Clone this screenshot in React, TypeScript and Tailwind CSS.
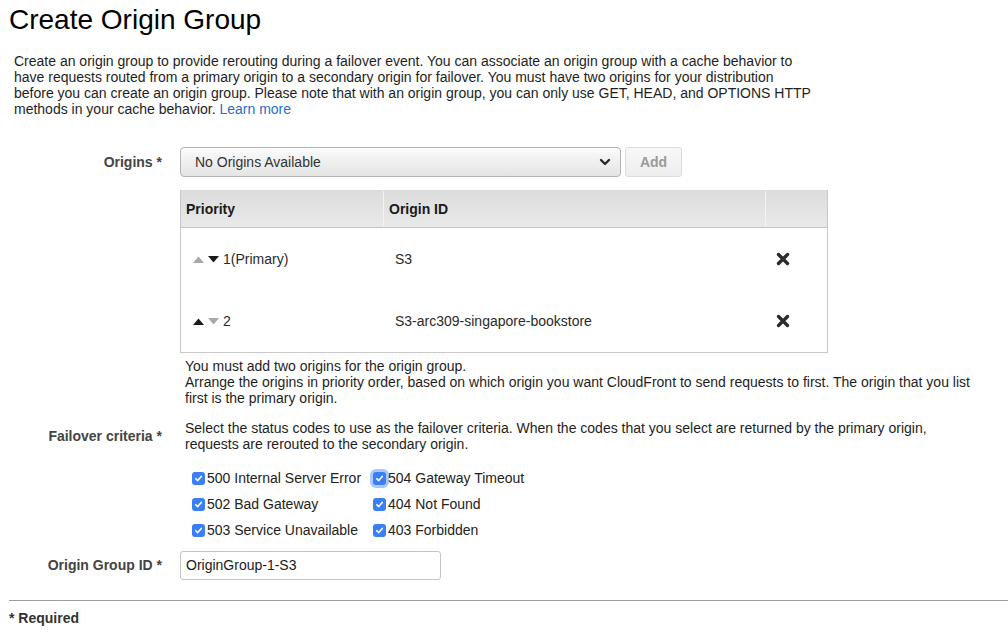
/**
 * CloudFront "Create Origin Group" form
 */

const codes = [
  { label: "500 Internal Server Error", focus: false },
  { label: "504 Gateway Timeout", focus: true },
  { label: "502 Bad Gateway", focus: false },
  { label: "404 Not Found", focus: false },
  { label: "503 Service Unavailable", focus: false },
  { label: "403 Forbidden", focus: false },
];

function Arrow({ dir, dark }: { dir: "up" | "down"; dark: boolean }) {
  return (
    <svg width="11" height="7" viewBox="0 0 11 7" className={dark ? "text-[#1a1a1a]" : "text-[#a8a8a8]"}>
      {dir === "up" ? (
        <polygon points="0,7 5.5,0.5 11,7" fill="currentColor" />
      ) : (
        <polygon points="0,0 5.5,6.5 11,0" fill="currentColor" />
      )}
    </svg>
  );
}

function RemoveIcon() {
  return (
    <svg width="14" height="14" viewBox="0 0 14 14" className="text-[#2b2b2b]">
      <path d="M2.5 2.5 L11.5 11.5 M11.5 2.5 L2.5 11.5" stroke="currentColor" strokeWidth="3.4" strokeLinecap="round" />
    </svg>
  );
}

function Checkbox({ focus }: { focus: boolean }) {
  return (
    <span
      className={`flex h-[13px] w-[13px] shrink-0 items-center justify-center rounded-[3px] bg-[#3a7ff5] ${
        focus ? "shadow-[0_0_0_3px_rgba(66,133,244,0.45)]" : ""
      }`}
    >
      <svg width="9" height="9" viewBox="0 0 9 9">
        <path d="M1.8 4.7 L3.7 6.6 L7.3 2.4" stroke="#fff" strokeWidth="1.6" fill="none" strokeLinecap="round" strokeLinejoin="round" />
      </svg>
    </span>
  );
}

export default function App() {
  const rows = [
    { up: false, down: true, priority: "1(Primary)", id: "S3" },
    { up: true, down: false, priority: "2", id: "S3-arc309-singapore-bookstore" },
  ];

  return (
    <div className="min-h-screen w-[1008px] bg-white font-['Liberation_Sans',Arial,Helvetica,sans-serif] text-[14px] text-[#1e1e1e]">
      {/* Title */}
      <h1 className="pl-[9px] text-[28px] leading-[40px] text-black">Create Origin Group</h1>

      {/* Intro */}
      <p className="mt-[13px] pl-[14px] leading-[16px]">
        Create an origin group to provide rerouting during a failover event. You can associate an origin group with a cache behavior to
        <br />
        have requests routed from a primary origin to a secondary origin for failover. You must have two origins for your distribution
        <br />
        before you can create an origin group. Please note that with an origin group, you can only use GET, HEAD, and OPTIONS HTTP
        <br />
        methods in your cache behavior. <span className="text-[#1f6fc6]">Learn more</span>
      </p>

      {/* Origins */}
      <div className="mt-[30px] flex items-center">
        <div className="w-[162px] shrink-0 text-right font-bold text-[#444]">Origins *</div>
        <div className="ml-[18px] flex h-[30px] w-[441px] items-center justify-between rounded-[4px] border border-[#b3b3b3] bg-linear-to-b from-[#fbfbfb] to-[#e4e4e4] pl-[14px] pr-[9px] text-[#333]">
          <span>No Origins Available</span>
          <svg width="12" height="8" viewBox="0 0 12 8">
            <path d="M2 2 L6 6 L10 2" stroke="#2a2a2a" strokeWidth="2.4" fill="none" strokeLinecap="round" strokeLinejoin="round" />
          </svg>
        </div>
        <div className="ml-[4px] flex h-[30px] w-[57px] items-center justify-center rounded-[3px] border border-[#dcdcdc] bg-linear-to-b from-[#f8f8f8] to-[#eeeeee] font-bold text-[#9a9a9a]">
          Add
        </div>
      </div>

      {/* Origins table */}
      <div className="ml-[180px] mt-[13px] w-[648px] border-x border-b border-[#c9c9c9]">
        <div className="flex h-[38px] border-b border-[#c6c6c6] bg-linear-to-b from-[#dcdcdc] to-[#e9e9e9] pt-[1px] font-bold text-[#1a1a1a]">
          <div className="flex w-[203px] items-center border-r border-[#f3f3f3] pl-[5px]">Priority</div>
          <div className="flex w-[382px] items-center border-r border-[#f3f3f3] pl-[5px]">Origin ID</div>
          <div className="flex-1" />
        </div>
        {rows.map((r) => (
          <div key={r.priority} className="flex h-[62px] items-center text-[#2a2a2a]">
            <div className="flex w-[203px] items-center pl-[12px]">
              <Arrow dir="up" dark={r.up} />
              <span className="ml-[4px]">
                <Arrow dir="down" dark={r.down} />
              </span>
              <span className="ml-[4px]">{r.priority}</span>
            </div>
            <div className="w-[382px] pl-[11px]">{r.id}</div>
            <div className="flex flex-1 justify-start pl-[10px]">
              <RemoveIcon />
            </div>
          </div>
        ))}
      </div>

      {/* Helper text */}
      <p className="ml-[185px] mt-[5px] leading-[16px]">
        You must add two origins for the origin group.
        <br />
        Arrange the origins in priority order, based on which origin you want CloudFront to send requests to first. The origin that you list
        <br />
        first is the primary origin.
      </p>

      {/* Failover criteria */}
      <div className="mt-[14px] flex items-center">
        <div className="w-[162px] shrink-0 text-right font-bold text-[#444]">Failover criteria *</div>
        <p className="ml-[23px] leading-[16px]">
          Select the status codes to use as the failover criteria. When the codes that you select are returned by the primary origin,
          <br />
          requests are rerouted to the secondary origin.
        </p>
      </div>

      <div className="ml-[192px] mt-[13px] grid w-[400px] grid-cols-[181px_1fr]">
        {codes.map((c) => (
          <label key={c.label} className="flex h-[26px] items-center gap-[2px] text-[#222]">
            <Checkbox focus={c.focus} />
            <span>{c.label}</span>
          </label>
        ))}
      </div>

      {/* Origin Group ID */}
      <div className="mt-[8px] flex items-center">
        <div className="w-[162px] shrink-0 text-right font-bold text-[#444]">Origin Group ID *</div>
        <div className="ml-[18px] flex h-[29px] w-[261px] items-center rounded-[3px] border border-[#c4c4c4] px-[5px] text-[#1a1a1a]">
          OriginGroup-1-S3
        </div>
      </div>

      <div className="ml-[9px] mt-[20px] border-t border-[#9c9c9c]" />
      <div className="mt-[9px] pl-[9px] font-bold leading-[16px] text-[#333]">* Required</div>
    </div>
  );
}
